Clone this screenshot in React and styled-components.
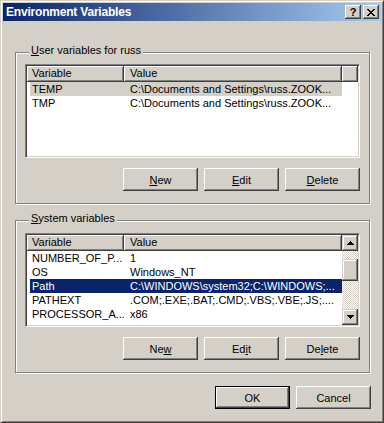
import React from 'react';
import styled, { createGlobalStyle } from 'styled-components';

const GlobalStyle = createGlobalStyle`
  html, body {
    margin: 0;
    padding: 0;
    background: #d4d0c8;
  }
`;

const FACE = '#d4d0c8';
const SHADOW = '#808080';
const DARK = '#404040';

const Window = styled.div`
  width: 384px;
  height: 423px;
  box-sizing: border-box;
  background: ${FACE};
  border: 1px solid;
  border-color: ${FACE} ${DARK} ${DARK} ${FACE};
  box-shadow: inset 1px 1px #fff, inset -1px -1px ${SHADOW};
  padding: 2px;
  display: flex;
  flex-direction: column;
  font-family: 'Liberation Sans', Arial, sans-serif;
  font-size: 11px;
  color: #000;
`;

const TitleBar = styled.div`
  height: 18px;
  flex: none;
  display: flex;
  align-items: center;
  padding: 0 2px 0 3px;
  background: linear-gradient(to right, #0a246a, #a6caf0);
  color: #fff;
`;

const TitleText = styled.div`
  flex: 1;
  font-weight: bold;
  font-size: 12px;
  letter-spacing: -0.2px;
  line-height: 18px;
`;

const CaptionButtons = styled.div`
  display: flex;
  gap: 2px;
`;

const CaptionButton = styled.div`
  width: 16px;
  height: 14px;
  box-sizing: border-box;
  background: ${FACE};
  box-shadow: inset -1px -1px ${DARK}, inset 1px 1px #fff,
    inset -2px -2px ${SHADOW};
  display: flex;
  align-items: center;
  justify-content: center;
  color: #000;
  font-weight: bold;
  font-size: 11px;
  line-height: 14px;
`;

const Body = styled.div`
  display: flex;
  flex-direction: column;
  padding: 0 10px 0 12px;
`;

const Group = styled.div`
  margin-top: ${(p) => p.$top}px;
  margin-right: 1px;
  border: 1px solid ${SHADOW};
  box-shadow: inset 1px 1px #fff, 1px 1px #fff;
  padding: 0 9px 12px 9px;
  display: flex;
  flex-direction: column;
`;

const GroupLabel = styled.div`
  align-self: flex-start;
  margin: -9px 0 0 4px;
  padding: 0 2px;
  line-height: 13px;
  background: ${FACE};
`;

const Key = styled.span`
  text-decoration: underline;
  text-underline-offset: 1px;
`;

const ListView = styled.div`
  margin-top: ${(p) => p.$top}px;
  height: 94px;
  box-sizing: border-box;
  background: #fff;
  border: 1px solid;
  border-color: ${SHADOW} #fff #fff ${SHADOW};
  box-shadow: inset 1px 1px ${DARK}, inset -1px -1px ${FACE};
  padding: 1px;
  display: flex;
  overflow: hidden;
`;

const ListMain = styled.div`
  flex: 1;
  display: flex;
  flex-direction: column;
  overflow: hidden;
`;

const HeaderRow = styled.div`
  display: flex;
  height: 16px;
  flex: none;
`;

const HeaderCell = styled.div`
  width: ${(p) => p.$w}px;
  flex: ${(p) => (p.$w ? 'none' : '1')};
  box-sizing: border-box;
  background: ${FACE};
  box-shadow: inset -1px -1px ${DARK}, inset 1px 1px #fff,
    inset -2px -2px ${SHADOW};
  padding-left: ${(p) => p.$pad}px;
  line-height: 15px;
  white-space: nowrap;
`;

const Row = styled.div`
  display: flex;
  height: 14px;
  flex: none;
  margin-left: 3px;
  width: 312px;
  line-height: 14px;
  white-space: nowrap;
  background: ${(p) =>
    p.$sel === 'active' ? '#0a246a' : p.$sel === 'inactive' ? FACE : 'transparent'};
  color: ${(p) => (p.$sel === 'active' ? '#fff' : '#000')};
`;

const NameCell = styled.div`
  width: 94px;
  padding-left: 2px;
  box-sizing: border-box;
  overflow: hidden;
`;

const ValueCell = styled.div`
  flex: 1;
  padding-left: 6px;
  overflow: hidden;
`;

const ScrollBar = styled.div`
  width: 16px;
  flex: none;
  display: flex;
  flex-direction: column;
`;

const ScrollButton = styled.div`
  height: 16px;
  flex: none;
  box-sizing: border-box;
  background: ${FACE};
  box-shadow: inset -1px -1px ${DARK}, inset 1px 1px ${FACE},
    inset -2px -2px ${SHADOW}, inset 2px 2px #fff;
  display: flex;
  align-items: center;
  justify-content: center;
`;

const Track = styled.div`
  flex: 1;
  background-color: #fff;
  background-image: conic-gradient(${FACE} 25%, #fff 0 50%, ${FACE} 0 75%, #fff 0);
  background-size: 2px 2px;
  display: flex;
  flex-direction: column;
`;

const Thumb = styled(ScrollButton)`
  margin-top: 8px;
  height: 22px;
`;

const ButtonRow = styled.div`
  display: flex;
  justify-content: flex-end;
  gap: 6px;
  margin-top: ${(p) => p.$top}px;
`;

const Button = styled.button`
  width: 75px;
  height: 23px;
  padding: 0;
  box-sizing: border-box;
  border: none;
  background: ${FACE};
  font-family: inherit;
  font-size: 11px;
  color: #000;
  box-shadow: ${(p) =>
    p.$default
      ? `inset 0 0 0 1px #000, inset -2px -2px ${DARK}, inset 2px 2px #fff, inset -3px -3px ${SHADOW}`
      : `inset -1px -1px ${DARK}, inset 1px 1px #fff, inset -2px -2px ${SHADOW}`};
`;

const UpArrow = () => (
  <svg width="7" height="4" viewBox="0 0 7 4">
    <path d="M3 0h1v1h1v1h1v1h1v1H0V3h1V2h1V1h1z" fill="#000" />
  </svg>
);

const DownArrow = () => (
  <svg width="7" height="4" viewBox="0 0 7 4">
    <path d="M0 0h7v1H6v1H5v1H4v1H3V3H2V2H1V1H0z" fill="#000" />
  </svg>
);

const CloseGlyph = () => (
  <svg width="8" height="7" viewBox="0 0 8 7">
    <path
      d="M0 0h2v1h1v1h2V1h1V0h2v1H7v1H6v1H5v1h1v1h1v1h1v1H6V6H5V5H3v1H2v1H0V6h1V5h1V4h1V3H2V2H1V1H0z"
      fill="#000"
    />
  </svg>
);

const userVars = [
  { name: 'TEMP', value: 'C:\\Documents and Settings\\russ.ZOOK...', sel: 'inactive' },
  { name: 'TMP', value: 'C:\\Documents and Settings\\russ.ZOOK...' },
];

const systemVars = [
  { name: 'NUMBER_OF_P...', value: '1' },
  { name: 'OS', value: 'Windows_NT' },
  { name: 'Path', value: 'C:\\WINDOWS\\system32;C:\\WINDOWS;...', sel: 'active' },
  { name: 'PATHEXT', value: '.COM;.EXE;.BAT;.CMD;.VBS;.VBE;.JS;....' },
  { name: 'PROCESSOR_A...', value: 'x86' },
];

const VarList = ({ rows, scroll, top }) => (
  <ListView $top={top}>
    <ListMain>
      <HeaderRow>
        <HeaderCell $w={97} $pad={5}>Variable</HeaderCell>
        <HeaderCell $w={218} $pad={6}>Value</HeaderCell>
        {!scroll && <HeaderCell $pad={0} />}
      </HeaderRow>
      {rows.map((r) => (
        <Row key={r.name} $sel={r.sel}>
          <NameCell>{r.name}</NameCell>
          <ValueCell>{r.value}</ValueCell>
        </Row>
      ))}
    </ListMain>
    {scroll && (
      <ScrollBar>
        <ScrollButton>
          <UpArrow />
        </ScrollButton>
        <Track>
          <Thumb />
        </Track>
        <ScrollButton>
          <DownArrow />
        </ScrollButton>
      </ScrollBar>
    )}
  </ListView>
);

export default function App() {
  return (
    <>
      <GlobalStyle />
      <Window>
        <TitleBar>
          <TitleText>Environment Variables</TitleText>
          <CaptionButtons>
            <CaptionButton>?</CaptionButton>
            <CaptionButton>
              <CloseGlyph />
            </CaptionButton>
          </CaptionButtons>
        </TitleBar>
        <Body>
          <Group $top={31}>
            <GroupLabel>
              <Key>U</Key>ser variables for russ
            </GroupLabel>
            <VarList rows={userVars} top={7} />
            <ButtonRow $top={10}>
              <Button><Key>N</Key>ew</Button>
              <Button><Key>E</Key>dit</Button>
              <Button><Key>D</Key>elete</Button>
            </ButtonRow>
          </Group>
          <Group $top={16}>
            <GroupLabel>
              <Key>S</Key>ystem variables
            </GroupLabel>
            <VarList rows={systemVars} scroll top={8} />
            <ButtonRow $top={10}>
              <Button>Ne<Key>w</Key></Button>
              <Button>Ed<Key>i</Key>t</Button>
              <Button>De<Key>l</Key>ete</Button>
            </ButtonRow>
          </Group>
          <ButtonRow $top={13}>
            <Button $default>OK</Button>
            <Button>Cancel</Button>
          </ButtonRow>
        </Body>
      </Window>
    </>
  );
}
